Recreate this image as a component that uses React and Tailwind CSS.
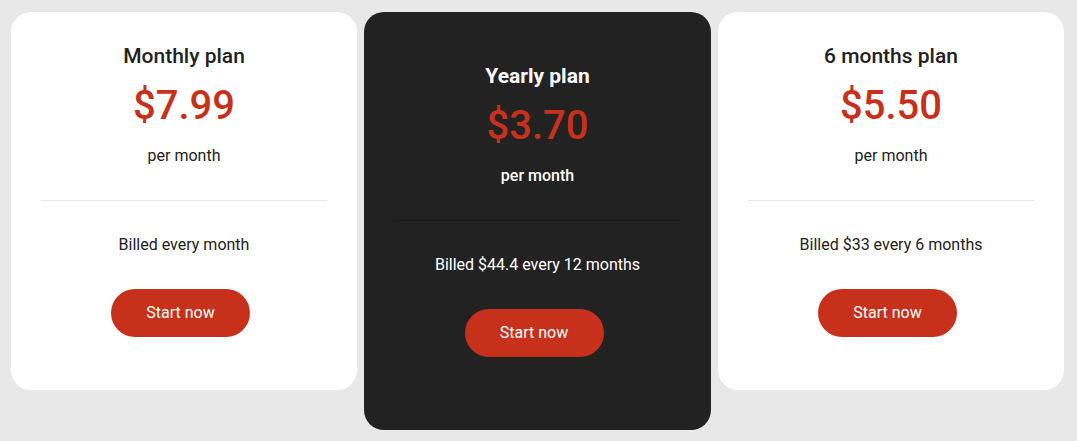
const PLANS = [
  { name: "Monthly plan", price: "$7.99", billed: "Billed every month" },
  { name: "Yearly plan", price: "$3.70", billed: "Billed $44.4 every 12 months", featured: true },
  { name: "6 months plan", price: "$5.50", billed: "Billed $33 every 6 months" },
];

function PlanCard({ plan }) {
  const dark = plan.featured;
  return (
    <div
      className={`rounded-[20px] px-[30px] text-center ${
        dark ? "w-[347px] bg-[#222222] pt-[50px] pb-[73px]" : "w-[346px] bg-white pt-[30px] pb-[53px]"
      }`}
    >
      <h3
        className={`text-[21px] leading-[28px] ${
          dark ? "font-bold text-white" : "font-medium text-[#222222]"
        }`}
      >
        {plan.name}
      </h3>
      <p className="mt-[12px] text-[40px] font-medium leading-[48px] text-[#c7311b]">{plan.price}</p>
      <p
        className={`mt-[14px] text-[16px] leading-[24px] ${
          dark ? "font-medium text-white" : "text-[#222222]"
        }`}
      >
        per month
      </p>
      <hr className={`mt-[32px] border-t ${dark ? "border-[#1d1d1d]" : "border-[#e8e8e8]"}`} />
      <p
        className={`mt-[32px] text-[16px] leading-[24px] ${
          dark ? "text-white" : "text-[#222222]"
        }`}
      >
        {plan.billed}
      </p>
      <button className="mt-[32px] mr-[7px] h-[48px] w-[139px] rounded-full bg-[#c7311b] text-[16px] text-white">
        Start now
      </button>
    </div>
  );
}

export default function App() {
  return (
    <div
      className="min-h-[441px] w-[1077px] bg-[#e8e8e8] pl-[11px] pt-[12px]"
      style={{ fontFamily: "Roboto, 'Liberation Sans', sans-serif" }}
    >
      <div className="flex items-start gap-[7px]">
        {PLANS.map((p) => (
          <PlanCard key={p.name} plan={p} />
        ))}
      </div>
    </div>
  );
}
